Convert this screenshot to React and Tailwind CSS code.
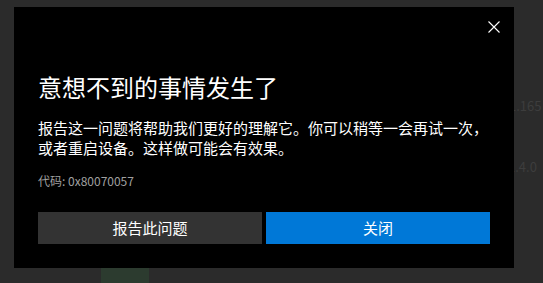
export default function App() {
  return (
    <div className="relative w-[543px] h-[283px] overflow-hidden bg-[#2b2b2b] font-['Noto_Sans_CJK_SC','Noto_Sans',sans-serif] flex flex-col">
      {/* background page (behind the dialog) */}
      <div className="pt-[98px] pl-[509px] text-[13px] leading-[16px] text-[#3d3d3d] whitespace-nowrap">1.165</div>
      <div className="pt-[45px] pl-[508px] text-[13px] leading-[16px] text-[#3d3d3d] whitespace-nowrap">1.4.0</div>
      <div className="flex-1" />
      <div className="ml-[101px] w-[48px] h-[15px] bg-[#2c3b2f]" />

      {/* dialog overlay */}
      <div className="absolute left-[14px] top-[7px] w-[500px] bg-black flex flex-col pb-[24px]">
        <div className="flex justify-end pt-[14px] pr-[14px]">
          <svg width="12" height="12" viewBox="0 0 12 12" className="block">
            <path d="M0.5 0.5 L11.5 11.5 M11.5 0.5 L0.5 11.5" stroke="#ffffff" strokeWidth="1.1" fill="none" />
          </svg>
        </div>
        <div className="px-[24px] flex flex-col">
          <h1 className="mt-[38px] text-[24px] leading-[32px] font-normal text-white whitespace-nowrap">意想不到的事情发生了</h1>
          <p className="mt-[15px] text-[15px] leading-[20px] text-white">
            报告这一问题将帮助我们更好的理解它。你可以稍等一会再试一次，或者重启设备。这样做可能会有效果。
          </p>
          <div className="mt-[15px] text-[12px] leading-[16px] text-[#a0a0a0]">代码: 0x80070057</div>
          <div className="mt-[23px] flex gap-[4px]">
            <button className="flex-1 h-[32px] bg-[#333333] text-white text-[15px] leading-[20px] flex items-center justify-center">报告此问题</button>
            <button className="flex-1 h-[32px] bg-[#0078d7] text-white text-[15px] leading-[20px] flex items-center justify-center">关闭</button>
          </div>
        </div>
      </div>
    </div>
  );
}
